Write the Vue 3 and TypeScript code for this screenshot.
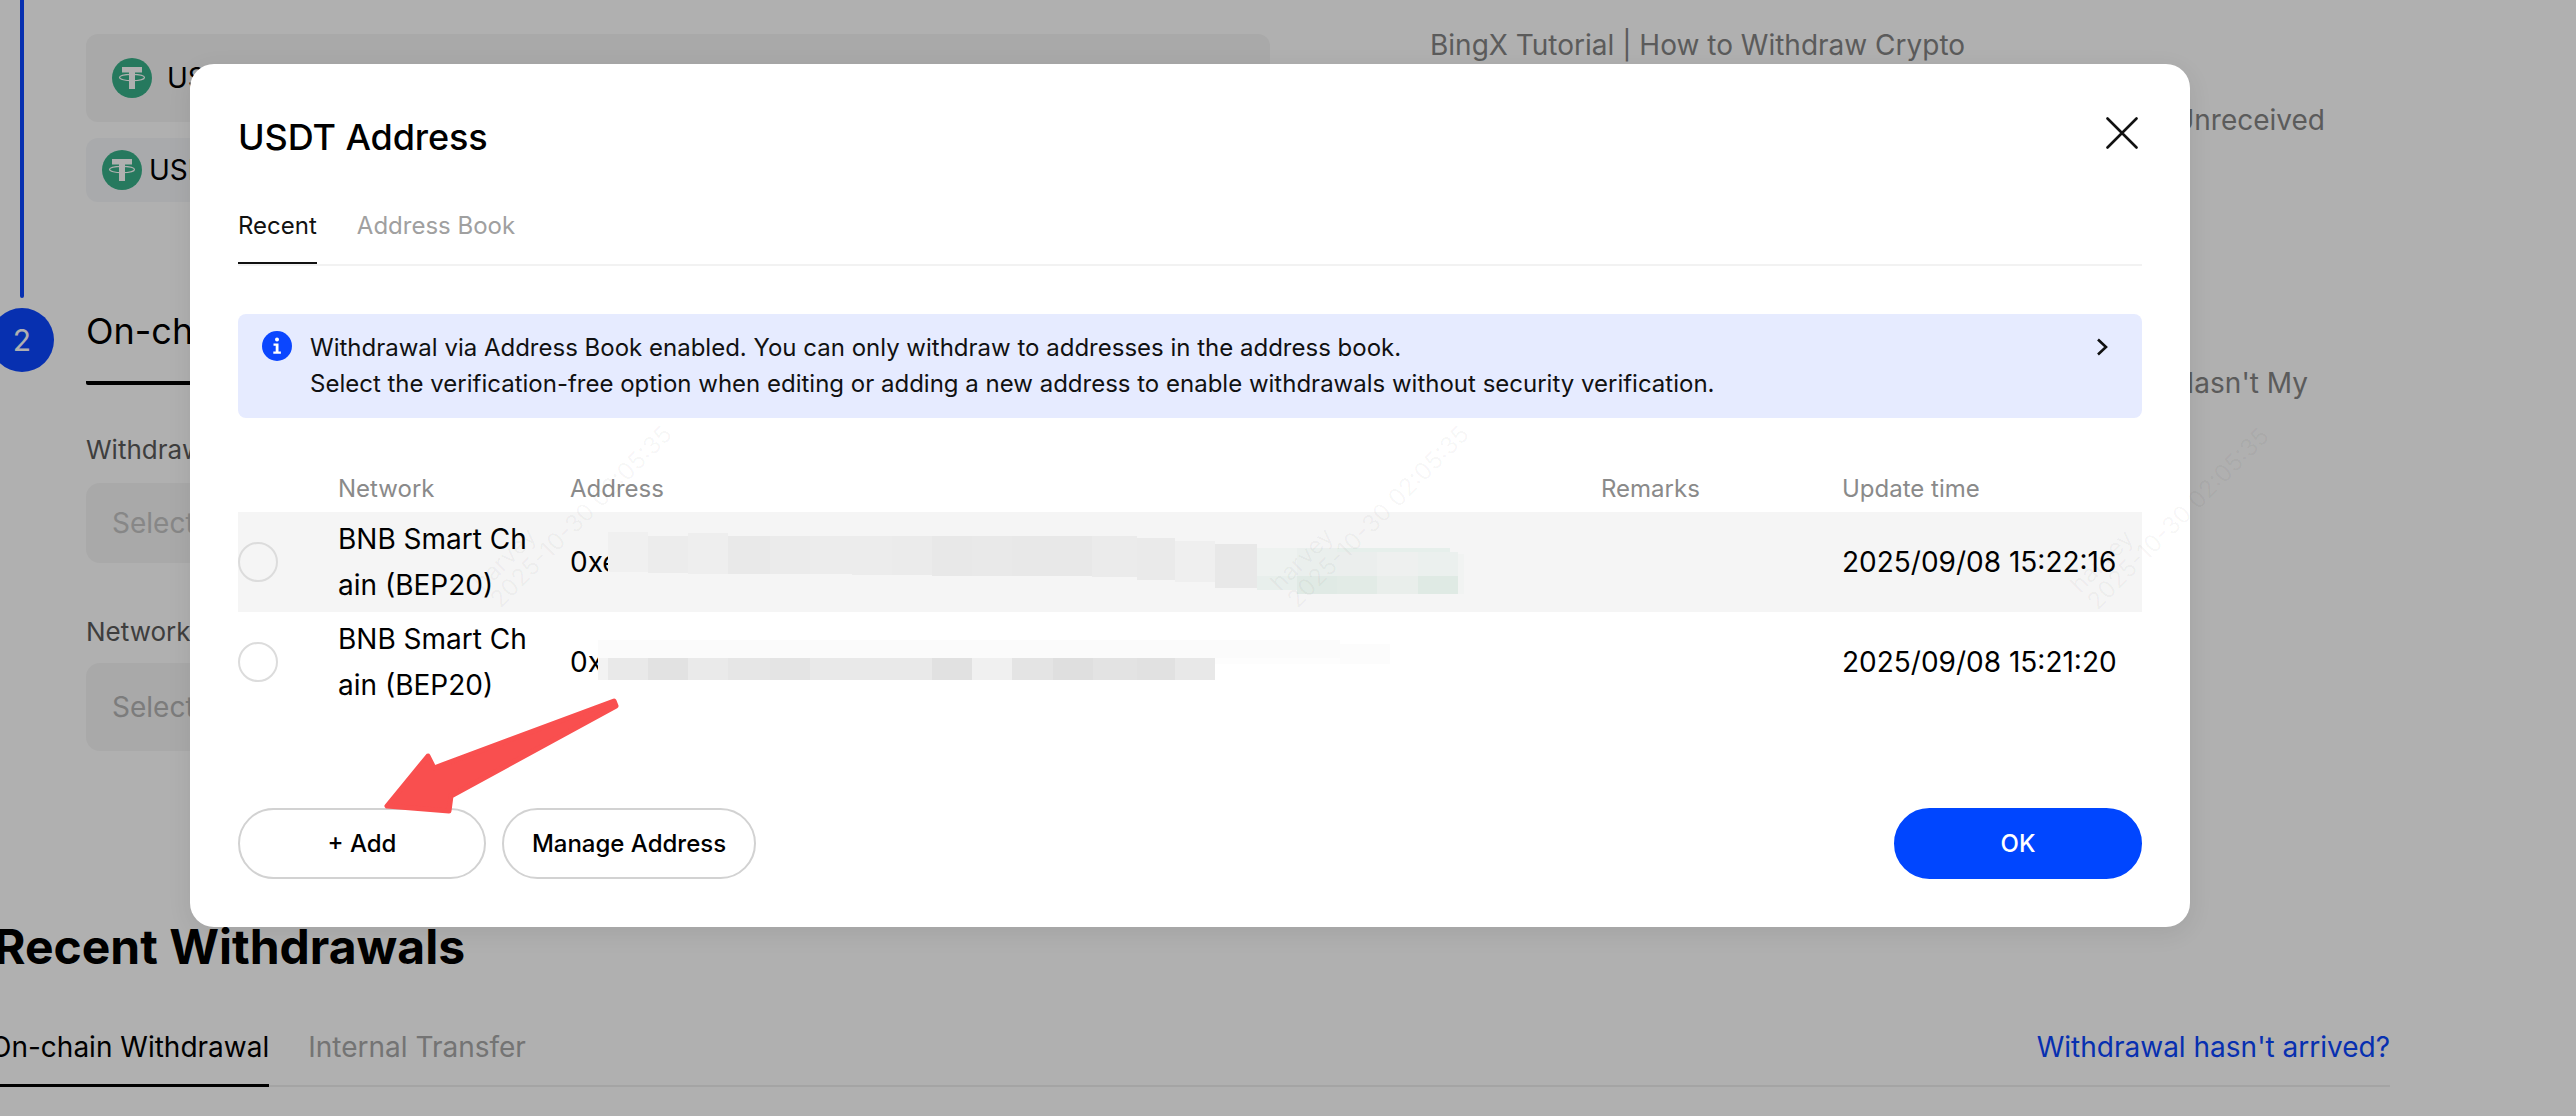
<script setup lang="ts">
interface Tile { x: number; y: number; w: number; h: number; f: string }
interface Row { net: string; addr: string; time: string }
interface Mark { x: number; y: number }

const rows: Row[] = [
  { net: 'BNB Smart Chain (BEP20)', addr: '0xe', time: '2025/09/08 15:22:16' },
  { net: 'BNB Smart Chain (BEP20)', addr: '0x', time: '2025/09/08 15:21:20' },
]

const t = (x: number, x2: number, y: number, y2: number, f: string): Tile => ({ x, y, w: x2 - x, h: y2 - y, f })

const tiles: Tile[] = [
  t(608, 648, 532, 572, '#f0f0f0'), t(648, 688, 536, 573, '#ececec'), t(688, 728, 533, 574, '#eeeeee'),
  t(728, 770, 536, 574, '#e9e9e9'), t(770, 810, 536, 574, '#ebebeb'), t(810, 852, 536, 574, '#ececec'),
  t(852, 892, 536, 575, '#ececec'), t(892, 932, 536, 575, '#ebebeb'), t(932, 972, 536, 576, '#e8e8e8'),
  t(972, 1012, 536, 576, '#e9e9e9'), t(1012, 1053, 536, 576, '#e8e8e8'), t(1053, 1092, 536, 576, '#e8e8e8'),
  t(1092, 1137, 536, 577, '#ebebeb'), t(1137, 1175, 538, 580, '#eaeaea'), t(1175, 1215, 541, 582, '#efefef'),
  t(1215, 1257, 544, 588, '#e8e8e8'),
  t(1306, 1450, 548, 554, '#e6efeb'),
  t(1257, 1297, 548, 576, '#eef2f0'), t(1257, 1297, 576, 590, '#e8efec'),
  t(1297, 1337, 548, 576, '#eaefed'), t(1297, 1337, 576, 594, '#e0eae5'),
  t(1337, 1377, 552, 576, '#ebeeed'), t(1337, 1377, 576, 594, '#e2ebe6'),
  t(1377, 1418, 552, 576, '#eef0ef'), t(1377, 1418, 576, 594, '#e9eeeb'),
  t(1418, 1458, 552, 576, '#ebf0ee'), t(1418, 1458, 576, 594, '#dfeae4'),
  t(1458, 1464, 554, 594, '#f1f3f2'),
  t(598, 1340, 640, 658, '#fbfbfb'), t(1340, 1390, 644, 664, '#fcfcfc'),
  t(1215, 1340, 658, 664, '#fdfdfd'),
  t(598, 608, 658, 680, '#f3f3f3'), t(608, 648, 658, 680, '#e9e9e9'), t(648, 688, 658, 680, '#e2e2e2'),
  t(688, 728, 658, 680, '#eaeaea'), t(728, 770, 658, 680, '#e6e6e6'), t(770, 810, 658, 680, '#e4e4e4'),
  t(810, 932, 658, 680, '#e9e9e9'), t(932, 972, 658, 680, '#e1e1e1'), t(972, 1012, 658, 680, '#f0f0f0'),
  t(1012, 1053, 658, 680, '#e4e4e4'), t(1053, 1093, 658, 680, '#dfdfdf'), t(1093, 1137, 658, 680, '#e3e3e3'),
  t(1137, 1175, 658, 680, '#e1e1e1'), t(1175, 1215, 658, 680, '#e8e8e8'),
]

const marks: Mark[] = [
  { x: 503, y: 612 },
  { x: 1300, y: 612 },
  { x: 2100, y: 614 },
]
</script>

<template>
  <div class="page">
    <div class="inner">
      <div class="top">
        <div class="steps">
          <div class="step step-one">
            <div class="rail"><span class="line"></span></div>
            <div class="coins">
              <div class="coin coin-large">
                <svg class="tether" viewBox="0 0 40 40"><circle cx="20" cy="20" r="20" fill="#38b088" /><path d="M10 9h20v5.5h-7V31h-6V14.5h-7z" fill="#fff" /><ellipse cx="20" cy="19.5" rx="12.5" ry="3.2" fill="none" stroke="#fff" stroke-width="1.2" /></svg>
                <span>USDT</span>
              </div>
              <div class="coin coin-small">
                <svg class="tether" viewBox="0 0 40 40"><circle cx="20" cy="20" r="20" fill="#38b088" /><path d="M10 9h20v5.5h-7V31h-6V14.5h-7z" fill="#fff" /><ellipse cx="20" cy="19.5" rx="12.5" ry="3.2" fill="none" stroke="#fff" stroke-width="1.2" /></svg>
                <span>USDT</span>
              </div>
            </div>
          </div>
          <div class="step">
            <div class="rail"><span class="num">2</span></div>
            <div class="form">
              <div class="form-tab">On-chain Withdrawal</div>
              <div class="label label-first">Withdrawal Address</div>
              <div class="field field-first">Select</div>
              <div class="label label-second">Network</div>
              <div class="field field-second">Select</div>
            </div>
          </div>
        </div>
        <aside class="aside">
          <div class="faq">BingX Tutorial | How to Withdraw Crypto</div>
          <div class="faq faq-clip faq-unrec">Unreceived</div>
          <div class="faq faq-clip faq-hasnt">Hasn't My</div>
        </aside>
      </div>

      <section class="recent">
        <h2 class="recent-title">Recent Withdrawals</h2>
        <div class="recent-tabs">
          <span class="recent-tab active">On-chain Withdrawal</span>
          <span class="recent-tab">Internal Transfer</span>
          <a class="recent-link">Withdrawal hasn't arrived?</a>
        </div>
      </section>
    </div>

    <div class="mask"></div>

    <div class="modal">
      <div class="modal-head">
        <h3 class="modal-title">USDT Address</h3>
        <svg class="close" viewBox="0 0 34 32"><path d="M2.5 1.5 31.5 30.5M31.5 1.5 2.5 30.5" fill="none" stroke="#111" stroke-width="2.6" stroke-linecap="round" /></svg>
      </div>
      <div class="tabs">
        <span class="tab tab-on">Recent</span>
        <span class="tab">Address Book</span>
      </div>
      <div class="notice">
        <svg class="info" viewBox="0 0 30 30"><circle cx="15" cy="15" r="15" fill="#0b46ff" /><circle cx="15" cy="8.6" r="2" fill="#fff" /><path d="M11.5 12.6h5v8h2.4v2.2h-7.6v-2.2h2.4v-5.8h-2.2z" fill="#fff" /></svg>
        <div class="notice-text">
          <div>Withdrawal via Address Book enabled. You can only withdraw to addresses in the address book.</div>
          <div>Select the verification-free option when editing or adding a new address to enable withdrawals without security verification.</div>
        </div>
        <svg class="chev" viewBox="0 0 12 18"><path d="M2 1.5 10 9l-8 7.5" fill="none" stroke="#111" stroke-width="2.6" /></svg>
      </div>

      <div class="table">
        <div class="thead">
          <span></span><span>Network</span><span>Address</span><span>Remarks</span><span>Update time</span>
        </div>
        <div v-for="(r, i) in rows" :key="i" class="trow" :class="{ hover: i === 0 }">
          <span class="radio"></span>
          <span class="net">{{ r.net }}</span>
          <span>{{ r.addr }}</span>
          <span></span>
          <span>{{ r.time }}</span>
        </div>
      </div>

      <div class="foot">
        <div class="foot-left">
          <button class="btn btn-add">+ Add</button>
          <button class="btn btn-manage">Manage Address</button>
        </div>
        <button class="btn btn-ok">OK</button>
      </div>
    </div>

    <svg class="annot" viewBox="0 0 2576 1116">
      <g class="mosaic">
        <rect v-for="(b, i) in tiles" :key="i" :x="b.x" :y="b.y" :width="b.w" :height="b.h" :fill="b.f" />
      </g>
      <path d="M614 701 434 768 428 756 387 806 449 811 451 796 616 706z" fill="#f94f4f" stroke="#f94f4f" stroke-width="5" stroke-linejoin="round" />
    </svg>

    <div v-for="(m, i) in marks" :key="i" class="mark" :style="{ left: m.x + 'px', top: m.y - 48 + 'px' }">
      <div>harvey</div>
      <div>2025-10-30 02:05:35</div>
    </div>
  </div>
</template>

<style>
html, body { margin: 0; overflow: hidden; background: #fff; }
</style>

<style scoped>
* { box-sizing: border-box; }
.page {
  position: relative;
  width: 2576px;
  height: 1116px;
  overflow: hidden;
  background: #fff;
  font-family: Inter, "Liberation Sans", sans-serif;
  color: #000;
}
.inner { margin-left: -10px; }
.top { display: flex; height: 912px; }
.steps { width: 1280px; }
.step { display: flex; gap: 32px; }
.step-one { height: 308px; }
.rail { width: 64px; flex: none; display: flex; justify-content: center; align-items: flex-start; }
.line { width: 4px; height: 298px; background: #0b46ff; border-radius: 0 0 2px 2px; }
.num {
  width: 64px; height: 64px; border-radius: 50%; background: #0b46ff; color: #fff;
  display: flex; align-items: center; justify-content: center; font-size: 30px;
}
.coins { flex: 1; padding-top: 34px; }
.coin { display: flex; align-items: center; font-size: 28px; border-radius: 12px; }
.coin-large { height: 88px; padding-left: 26px; gap: 15px; background: #f5f5f5; }
.coin-small { height: 64px; margin-top: 16px; padding-left: 16px; gap: 7px; background: #f5f7fa; width: 300px; }
.tether { width: 40px; height: 40px; flex: none; }
.form { flex: 1; }
.form-tab {
  display: inline-block; font-size: 36px; line-height: 44px; height: 77px;
  padding-top: 1px; border-bottom: 4px solid #000; border-radius: 0 0 2px 2px;
}
.label { font-size: 26px; line-height: 36px; color: #5b5b5b; }
.label-first { margin-top: 47px; }
.label-second { margin-top: 51px; }
.field {
  margin-top: 15px; background: #f5f5f5; border-radius: 14px; padding-left: 26px;
  font-size: 28px; display: flex; align-items: center; color: #c4c4c4;
}
.field-first { height: 80px; }
.field-second { height: 88px; color: #b4b4b4; margin-top: 13px; }
.aside { margin-left: 160px; padding-top: 25px; font-size: 28px; line-height: 40px; color: #858585; }
.faq { white-space: nowrap; }
.faq-clip { width: 895px; text-align: right; }
.faq-unrec { margin-top: 35px; }
.faq-hasnt { margin-top: 223px; width: 878px; }
.recent-title { margin: 0; font-size: 48px; line-height: 56px; font-weight: 700; margin-top: 7px; margin-left: 4px; }
.recent-tabs {
  display: flex; align-items: flex-end; height: 112px;
  border-bottom: 2px solid #eee; width: 2400px; font-size: 28px; line-height: 40px;
  gap: 39px;
}
.recent-tab { color: #a8a8a8; height: 60px; margin-bottom: -2px; }
.recent-tab.active { color: #000; border-bottom: 3px solid #000; }
.recent-link { margin-left: auto; color: #0b46ff; height: 60px; margin-bottom: -2px; }
.mask { position: absolute; inset: 0; background: rgba(0, 0, 0, 0.31); }
.modal {
  position: absolute; left: 190px; top: 64px; width: 2000px; height: 863px;
  background: #fff; border-radius: 24px; padding: 0 48px;
  box-shadow: 0 6px 24px rgba(0, 0, 0, 0.08);
}
.modal-head { display: flex; justify-content: space-between; padding-top: 51px; height: 95px; }
.modal-title { margin: 0; font-size: 36px; line-height: 44px; font-weight: 500; letter-spacing: -0.1px; }
.close { width: 34px; height: 32px; margin-top: 2px; margin-right: 3px; }
.tabs { display: flex; gap: 40px; margin-top: 49px; border-bottom: 2px solid #f2f2f2; font-size: 24px; line-height: 36px; height: 58px; }
.tab { color: #a0a0a0; height: 56px; }
.tab-on { color: #111; border-bottom: 2px solid #111; }
.notice {
  display: flex; margin-top: 48px; height: 104px; padding: 16px 34px 16px 24px;
  background: #e6ebff; border-radius: 8px; font-size: 24px; line-height: 36px; color: #111;
}
.info { width: 30px; height: 30px; flex: none; margin-top: 1px; margin-right: 18px; }
.notice-text { flex: 1; }
.chev { width: 12px; height: 18px; flex: none; margin-top: 8px; }
.table { margin-top: 53px; }
.thead, .trow { display: grid; grid-template-columns: 100px 232px 1031px 241px 1fr; align-items: center; }
.thead { height: 41px; align-items: start; font-size: 24px; line-height: 36px; color: #8a8a8a; }
.trow { height: 100px; font-size: 28px; color: #000; }
.hover { background: #f5f5f5; }
.radio { width: 40px; height: 40px; border-radius: 50%; border: 2px solid #dcdcdc; }
.net { width: 196px; word-break: break-all; line-height: 46px; }
.foot { display: flex; justify-content: space-between; margin-top: 96px; }
.foot-left { display: flex; gap: 16px; }
.btn {
  height: 71px; border-radius: 36px; border: 2px solid #d2d2d2; background: #fff;
  font-family: inherit; font-size: 24px; font-weight: 500; color: #000; padding: 0;
}
.btn-add { width: 248px; }
.btn-manage { width: 254px; }
.btn-ok { width: 248px; background: #0046ff; border-color: #0046ff; color: #fff; }
.annot { position: absolute; inset: 0; width: 2576px; height: 1116px; pointer-events: none; }
.mosaic { filter: blur(0.6px); }
.mark {
  position: absolute; font-size: 24px; line-height: 24px; white-space: nowrap;
  color: rgba(0, 0, 0, 0.04); transform-origin: 0 100%; transform: rotate(-45deg); pointer-events: none;
}
</style>
